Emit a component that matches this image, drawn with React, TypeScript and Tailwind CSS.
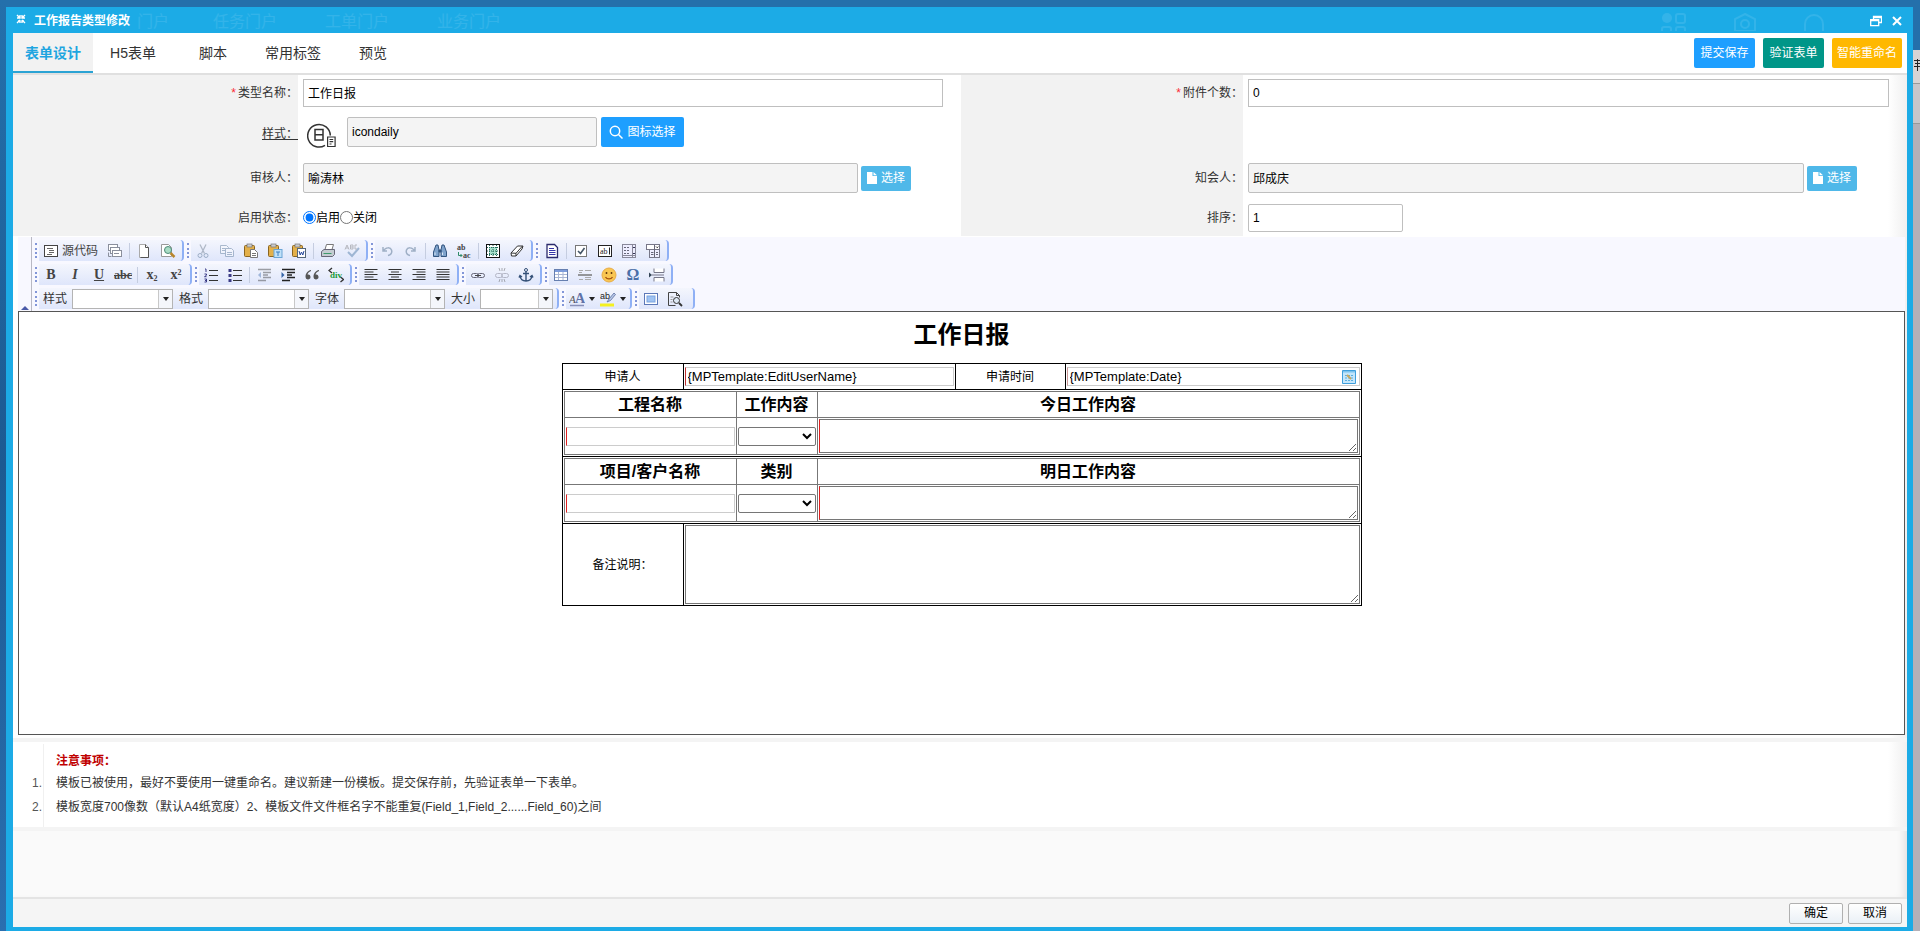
import { useState } from "react";
import type { ReactNode } from "react";

const TABS = ["表单设计", "H5表单", "脚本", "常用标签", "预览"];

const INPUT = "min-w-0 border border-[#bfbfbf] px-1 text-xs text-black outline-none";
const READONLY = `${INPUT} h-[30px] rounded-xs bg-[#f4f4f4]`;

/* ---------- toolbar icons ---------- */

function Icon({ children, dim }: { children: ReactNode; dim?: boolean }) {
  return (
    <svg
      viewBox="0 0 16 16"
      fill="none"
      stroke="#444"
      aria-hidden="true"
      className={`h-4 w-4 shrink-0 ${dim ? "opacity-40" : ""}`}
    >
      {children}
    </svg>
  );
}

const SourceIcon = () => (
  <Icon>
    <rect x="1.5" y="2.5" width="13" height="11" fill="#fff" />
    <path d="M4 5.5h6M6 7.500h5M6 9.500h5M4 11.500h5" stroke="#666" />
  </Icon>
);
const TemplatesIcon = () => (
  <Icon>
    <g stroke="#8a8f9c">
      <rect x="1.5" y="1.5" width="9" height="6" fill="#fff" />
      <rect x="3.5" y="4.5" width="9" height="6" fill="#fff" />
      <rect x="5.5" y="7.5" width="9" height="6" fill="#fff" />
      <path d="M7 10.5h5M1.5 9.5v4h3" />
    </g>
  </Icon>
);
const NewPageIcon = () => (
  <Icon>
    <path d="M3.500 1.500h6l3 3v10h-9z" fill="#fff" stroke="#aaa" />
    <path d="M9.500 1.500v3h3v10h-8" stroke="#555" />
  </Icon>
);
const PreviewIcon = () => (
  <Icon>
    <path d="M1.500 1.500h7l3 3v9h-10z" fill="#fff" stroke="#999" />
    <circle cx="8" cy="7" r="3.500" fill="#a8dcc4" stroke="#4f8a78" />
    <path d="m10.500 10 4 4" stroke="#b8862c" strokeWidth="2.500" />
  </Icon>
);
const CutIcon = () => (
  <Icon dim>
    <path d="m5 1.500 4.500 9M11 1.500l-4.500 9" stroke="#567" strokeWidth="1.300" />
    <circle cx="5" cy="12.500" r="2" stroke="#357" />
    <circle cx="11" cy="12.500" r="2" stroke="#357" />
  </Icon>
);
const CopyIcon = () => (
  <Icon dim>
    <path d="M1.500 2.500h6l2 2v6h-8zM3 5.500h4M3 7.500h4" fill="#fff" stroke="#468" />
    <path d="M6.500 5.500h6l2 2v6h-8zM8 9.500h5M8 11.500h5" fill="#fff" stroke="#468" />
  </Icon>
);
function PasteIcon({ kind }: { kind: "plain" | "text" | "word" }) {
  return (
    <Icon>
      <rect x="1.500" y="2.500" width="10" height="11" rx="1" fill="#e3b04a" stroke="#8a6520" />
      <rect x="4" y="1" width="5" height="3" fill="#ccc" stroke="#777" strokeWidth=".7" />
      {kind === "plain" && (
        <path d="M7.500 6.500h4l3 3v5h-7zM9 10.500h4M9 12.500h4" fill="#fff" stroke="#777" />
      )}
      {kind === "text" && (
        <>
          <rect x="7" y="6.500" width="8" height="8" fill="#bfe0f8" stroke="#6aa5d6" />
          <path d="M9 9h4M11 9v4" stroke="#3b7fc0" />
        </>
      )}
      {kind === "word" && (
        <>
          <rect x="6.500" y="5.500" width="8" height="9" fill="#fff" stroke="#567" />
          <path d="m8 8 1.200 4 1.300-3 1.300 3L13 8" stroke="#24479c" />
        </>
      )}
    </Icon>
  );
}
const PrintIcon = () => (
  <Icon>
    <path d="M5 6.500 6.500 1.500h7L12 6.500" fill="#fff" stroke="#777" />
    <path d="M1.500 8.500 4 6.500h10.500v5l-2 2h-11z" fill="#c4ccd2" stroke="#667" />
    <path d="M3.500 10.500h8" stroke="#3d9a6c" />
  </Icon>
);
const SpellIcon = () => (
  <Icon dim>
    <path d="m4 9 4 4 7-8" stroke="#369" strokeWidth="2" />
    <path d="M1 6.500 3 2l2 4.500M2 5h2M6.500 2h2.500v4H6.500zM6.500 4H9M13 2h-2v4h2" stroke="#666" />
  </Icon>
);
const UndoIcon = () => (
  <Icon dim>
    <path d="M4 4v4h4M4.500 8c2-4 7-4 8-1s-1 5-3.500 5.500" stroke="#357" strokeWidth="1.500" />
  </Icon>
);
const RedoIcon = () => (
  <Icon dim>
    <path d="M12 4v4H8M11.500 8c-2-4-7-4-8-1s1 5 3.500 5.500" stroke="#357" strokeWidth="1.500" />
  </Icon>
);
const FindIcon = () => (
  <Icon>
    <path d="M4 2h2l1 5v6.500H1.500V9zM10 2h2l2.500 7v4.500H9V7z" fill="#7fa3cc" stroke="#33557f" />
    <path d="M7 7h2v2H7z" fill="#33557f" stroke="#33557f" />
    <path d="M3 9.500v2.500M10.500 9.500v2.500" stroke="#dce9f7" />
  </Icon>
);
const ReplaceIcon = () => (
  <Icon>
    <text x="1" y="7" fontSize="8" fill="#444" stroke="none">ab</text>
    <text x="7" y="15" fontSize="8" fill="#444" stroke="none">ac</text>
    <path d="M2.500 9v3.500H6M4.500 11 6 12.500 4.500 14" stroke="#2f8b68" />
  </Icon>
);
const SelectAllIcon = () => (
  <Icon>
    <rect x="1.500" y="1.500" width="13" height="13" fill="#fff" stroke="#111" />
    <rect x="4" y="4" width="8" height="8" fill="#a6e0cc" stroke="none" />
    <path d="M4.500 2v12M11.500 2v12M2 4.500h12M2 8h12M2 11.500h12M8 2v12" stroke="#22685a" strokeDasharray="1 1" />
  </Icon>
);
const EraserIcon = () => (
  <Icon>
    <path d="M2 10 8.500 3h5.500l-1 3-6 7H2.500z" fill="#fff" stroke="#333" strokeLinejoin="round" />
    <path d="m2 10 5 .300L13.500 3M7 10.300V13" stroke="#333" />
  </Icon>
);
const FormIcon = () => (
  <Icon>
    <path d="M3 1.500h7.500l3 3v10H3z" fill="#fff" stroke="#2a2a6c" strokeWidth="1.300" />
    <path d="M5 5.500h5M5 7.500h6.500M5 9.500h6.500M5 11.500h6.500" stroke="#3636a8" />
  </Icon>
);
const CheckboxIcon = () => (
  <Icon>
    <rect x="2.500" y="2.500" width="11" height="11" fill="#fff" stroke="#777" />
    <path d="m5 8 2.500 2.500L11.500 5" stroke="#456" strokeWidth="1.600" />
  </Icon>
);
const TextFieldIcon = () => (
  <Icon>
    <rect x="1.500" y="2.500" width="13" height="11" fill="#fff" stroke="#222" />
    <text x="3" y="11" fontSize="8" fontWeight="normal" fill="#222" stroke="none">ab</text>
    <path d="M12.500 4.500v7" stroke="#222" />
  </Icon>
);
const TextareaIcon = () => (
  <Icon>
    <rect x="1.500" y="1.500" width="13" height="13" fill="#eef" stroke="#889" />
    <path d="M3 4.500h6M3 7.500h6M3 10.500h6" stroke="#667" strokeDasharray="2 1" />
    <path d="M11.500 2v12M2 12.500h12" stroke="#889" />
    <path d="m12 5 1-1 1 1M12 10l1 1 1-1" stroke="#335" />
  </Icon>
);
const SelectFieldIcon = () => (
  <Icon>
    <rect x="1.500" y="1.500" width="13" height="5" fill="#fff" stroke="#778" />
    <rect x="4.500" y="6.500" width="10" height="8" fill="#eef" stroke="#778" />
    <path d="M9.500 2v12M6 9.500h2.500M6 11.500h2.500M11 9.500h2M11 11.500h2" stroke="#667" />
    <path d="m11 3.500 1.200 1.200L13.400 3.500" stroke="#222" />
  </Icon>
);
function ListIcon({ ordered }: { ordered?: boolean }) {
  return (
    <Icon>
      <path d="M6 3.500h9M6 8.500h9M6 13.500h9" stroke="#333" />
      {ordered ? (
        <path d="M2 2h1v3M1.500 7h2v1.200l-2 1.500h2M1.500 12h2v3h-2M2 13.500h1.500" stroke="#3b3b86" />
      ) : (
        <path d="M1.500 2h3v3h-3zM1.500 7h3v3h-3zM1.500 12h3v3h-3z" fill="#3b3b86" stroke="none" />
      )}
    </Icon>
  );
}
function IndentIcon({ out }: { out?: boolean }) {
  return (
    <Icon dim={out}>
      <path d="M2 2.500h13M7 5.500h8M7 8h5M7 10.500h8M2 13.500h8" stroke="#222" strokeWidth="1.500" />
      <path d={out ? "M5 5 2 8l3 3z" : "m1.500 5 3 3-3 3z"} fill="#3565a8" stroke="none" />
    </Icon>
  );
}
const QuoteIcon = () => (
  <Icon>
    <path
      d="M7 3C4 3.500 1.500 6 1.500 10a2.500 2.500 0 1 0 2-2.500C3.800 6 5 4.700 7 4zM15 3c-3 .500-5.500 3-5.500 7a2.500 2.500 0 1 0 2-2.500C11.800 6 13 4.700 15 4z"
      fill="#555"
      stroke="none"
    />
  </Icon>
);
const DivIcon = () => (
  <Icon>
    <path d="M4 1 1 3.500 4 6M12.500 10l3 2.500-3 2.500" stroke="#333" strokeWidth="1.300" />
    <text x="2" y="11" fontSize="9" fill="#189a38" stroke="none">div</text>
  </Icon>
);
const ALIGN_PATHS = {
  left: "M1.500 2.500h13M1.500 5h9M1.500 7.500h13M1.500 10h9M1.500 12.500h13",
  center: "M1.500 2.500h13M4 5h8M1.500 7.500h13M4 10h8M1.500 12.500h13",
  right: "M1.500 2.500h13M5.500 5h9M1.500 7.500h13M5.500 10h9M1.500 12.500h13",
  justify: "M1.500 2.500h13M1.500 5h13M1.500 7.500h13M1.500 10h13M1.500 12.500h13",
};
function AlignIcon({ side }: { side: keyof typeof ALIGN_PATHS }) {
  return (
    <Icon>
      <path d={ALIGN_PATHS[side]} stroke="#333" strokeWidth="1.200" />
    </Icon>
  );
}
function LinkIcon({ broken }: { broken?: boolean }) {
  return (
    <Icon dim={broken}>
      <rect x="1.500" y="6.500" width="7" height="4" rx="2" stroke="#667" />
      <rect x="7.500" y="6.500" width="7" height="4" rx="2" stroke="#667" />
      {broken ? <path d="m5 1 1 3M8 1v3M11 1l-1 3M5 15l1-3M8 15v-3M11 15l-1-3" /> : <path d="M5 8.500h6" />}
    </Icon>
  );
}
const AnchorIcon = () => (
  <Icon>
    <circle cx="8" cy="3" r="1.500" stroke="#345077" />
    <path d="M8 4.500V14M5 6.500h6M2 9c.500 3.500 3 5 6 5s5.500-1.500 6-5M1 10.500 2 8.500l2 1.500M15 10.500l-1-2-2 1.500" stroke="#345077" strokeWidth="1.400" />
  </Icon>
);
const TableIcon = () => (
  <Icon>
    <rect x="1.500" y="2.500" width="13" height="11" fill="#fff" stroke="#667fb0" />
    <path d="M2 4h12" stroke="#7d9cdb" strokeWidth="2" />
    <path d="M5.500 5v8M10 5v8M2 7.500h12M2 10.500h12" stroke="#a9b6d4" />
  </Icon>
);
const RuleIcon = () => (
  <Icon>
    <path d="M2 3.500h4M8 3.500h6M2 12.500h4M8 12.500h6M2 5.500h3M8 10.500h6" stroke="#aaa" />
    <path d="M1 8h14" stroke="#777" strokeWidth="1.500" />
  </Icon>
);
const SmileyIcon = () => (
  <Icon>
    <circle cx="8" cy="8" r="7" fill="#f9c652" stroke="#e8ac48" />
    <path d="M5.500 5v2M10.500 5v2" stroke="#6b3f10" strokeWidth="1.500" />
    <path d="M4.500 10c1.500 2.500 5.500 2.500 7 0" stroke="#a4500f" strokeWidth="1.300" />
  </Icon>
);
const PageBreakIcon = () => (
  <Icon>
    <path d="M5 1.500v4h10v-4M5 14.500v-4h10v4M3 8h12" fill="#fff" stroke="#778" />
    <path d="m0 5.500 3 2.500-3 2.500z" fill="#345" stroke="none" />
  </Icon>
);
const MaximizeIcon = () => (
  <Icon>
    <rect x="1.500" y="2.500" width="13" height="11" fill="#fff" stroke="#5c78b8" />
    <rect x="4" y="5" width="8" height="6" fill="#9fc3f2" stroke="#7aa3df" />
  </Icon>
);
const BlocksIcon = () => (
  <Icon>
    <path d="M1.500 14.500v-13h8l3 3v2M9.500 1.500v3h3M1.500 14.500h7" stroke="#444" />
    <path d="M3.500 6h3M3.500 8.500h2M3.500 11h2" stroke="#999" />
    <circle cx="9.500" cy="9.500" r="3" fill="#dde8f5" stroke="#333" />
    <path d="m12 12 3 3" stroke="#333" strokeWidth="1.800" />
  </Icon>
);
const TextColorIcon = () => (
  <svg viewBox="0 0 16 16" className="h-4 w-4" aria-hidden="true">
    <text x="0" y="12" fontSize="11" fontStyle="italic" fontFamily="Liberation Serif" fill="#555">A</text>
    <text x="6" y="12" fontSize="14" fontWeight="bold" fontFamily="Liberation Serif" fill="#5f73a8">A</text>
    <path d="M1 14.500h14" stroke="#8890b8" strokeWidth="1.500" />
  </svg>
);
const BgColorIcon = () => (
  <svg viewBox="0 0 16 16" className="h-4 w-4" aria-hidden="true">
    <text x="0" y="8" fontSize="9" fill="#222">ab</text>
    <path d="m7 11 2-3 5-6 1.500 1.500-5 6z" fill="#b9c8e6" stroke="#5a6da0" strokeWidth=".8" />
    <path d="M0 12.500h14v3H0z" fill="#f4f020" />
  </svg>
);

/* ---------- toolbar pieces ---------- */

function Tool({ label, children }: { label: string; children: ReactNode }) {
  return (
    <button
      type="button"
      aria-label={label}
      title={label}
      className="flex h-[21px] w-6 items-center justify-center font-['Liberation_Serif',serif] text-sm font-bold text-[#444]"
    >
      {children}
    </button>
  );
}

const Sep = () => <span className="mx-0.5 h-4 w-px bg-[#c5cde0]" />;

const Caret = () => (
  <svg viewBox="0 0 6 4" className="h-1 w-1.5 shrink-0" aria-hidden="true">
    <path d="M0 0h6L3 4z" fill="#222" />
  </svg>
);

function Group({ children }: { children: ReactNode }) {
  return (
    <div className="flex items-center">
      <span className="mr-0.5 h-[15px] border-l-2 border-dotted border-[#8296d8]" />
      <div className="flex h-[21px] items-center rounded-r-sm border-r-2 border-[#8fb0f5] bg-linear-to-b from-[#f4f6fd] to-[#dfe6fb] pr-0.5">
        {children}
      </div>
      <span className="w-[3px]" />
    </div>
  );
}

function Combo({ label, wide = true }: { label: string; wide?: boolean }) {
  return (
    <label className="flex items-center gap-[5px] pr-0.5 pl-1 text-xs text-[#333]">
      {label}
      <span
        className={`flex h-5 items-center border border-[#b4b4b4] bg-white ${wide ? "w-[101px]" : "w-[73px]"}`}
      >
        <select className="h-full min-w-0 flex-1 appearance-none outline-none" />
        <span className="flex h-full w-3.5 items-center justify-center border-l border-[#c8c8c8] bg-[#f4f6fb]">
          <Caret />
        </span>
      </span>
    </label>
  );
}

function Toolbar() {
  return (
    <div className="flex bg-[#f8f8ff]">
      <button type="button" aria-label="收起工具栏" className="flex w-[13px] items-end justify-center pb-px">
        <svg viewBox="0 0 8 4" className="h-1 w-2">
          <path d="M0 4h8L4 0z" fill="#4a5aa8" />
        </svg>
      </button>
      <div className="flex flex-1 flex-col gap-[3px] border-l border-[#b9b9c4] pt-[3px] pb-0.5 pl-[3px]">
        <div className="flex">
          <Group>
            <button type="button" className="flex h-[21px] w-16 items-center gap-[3px] pl-1 text-xs whitespace-nowrap text-[#444]">
              <SourceIcon />
              源代码
            </button>
            <Tool label="模板"><TemplatesIcon /></Tool>
            <Sep />
            <Tool label="新建"><NewPageIcon /></Tool>
            <Tool label="预览"><PreviewIcon /></Tool>
          </Group>
          <Group>
            <Tool label="剪切"><CutIcon /></Tool>
            <Tool label="复制"><CopyIcon /></Tool>
            <Tool label="粘贴"><PasteIcon kind="plain" /></Tool>
            <Tool label="粘贴为文本"><PasteIcon kind="text" /></Tool>
            <Tool label="从 Word 粘贴"><PasteIcon kind="word" /></Tool>
            <Sep />
            <Tool label="打印"><PrintIcon /></Tool>
            <Tool label="拼写检查"><SpellIcon /></Tool>
          </Group>
          <Group>
            <Tool label="撤消"><UndoIcon /></Tool>
            <Tool label="重做"><RedoIcon /></Tool>
            <Sep />
            <Tool label="查找"><FindIcon /></Tool>
            <Tool label="替换"><ReplaceIcon /></Tool>
            <Sep />
            <Tool label="全选"><SelectAllIcon /></Tool>
            <Tool label="清除格式"><EraserIcon /></Tool>
          </Group>
          <Group>
            <Tool label="表单"><FormIcon /></Tool>
            <Sep />
            <Tool label="复选框"><CheckboxIcon /></Tool>
            <Tool label="单行文本"><TextFieldIcon /></Tool>
            <Tool label="多行文本"><TextareaIcon /></Tool>
            <Tool label="列表"><SelectFieldIcon /></Tool>
          </Group>
        </div>
        <div className="flex">
          <Group>
            <Tool label="加粗">B</Tool>
            <Tool label="倾斜"><i>I</i></Tool>
            <Tool label="下划线"><u>U</u></Tool>
            <Tool label="删除线"><s className="text-xs">abc</s></Tool>
            <Sep />
            <Tool label="下标"><span>x<sub className="text-[8px]">2</sub></span></Tool>
            <Tool label="上标"><span>x<sup className="text-[8px]">2</sup></span></Tool>
          </Group>
          <Group>
            <Tool label="编号列表"><ListIcon ordered /></Tool>
            <Tool label="项目列表"><ListIcon /></Tool>
            <Sep />
            <Tool label="减少缩进"><IndentIcon out /></Tool>
            <Tool label="增加缩进"><IndentIcon /></Tool>
            <Tool label="引用"><QuoteIcon /></Tool>
            <Tool label="DIV 标签"><DivIcon /></Tool>
          </Group>
          <Group>
            <Tool label="左对齐"><AlignIcon side="left" /></Tool>
            <Tool label="居中"><AlignIcon side="center" /></Tool>
            <Tool label="右对齐"><AlignIcon side="right" /></Tool>
            <Tool label="两端对齐"><AlignIcon side="justify" /></Tool>
          </Group>
          <Group>
            <Tool label="超链接"><LinkIcon /></Tool>
            <Tool label="取消超链接"><LinkIcon broken /></Tool>
            <Tool label="锚点"><AnchorIcon /></Tool>
          </Group>
          <Group>
            <Tool label="表格"><TableIcon /></Tool>
            <Tool label="水平线"><RuleIcon /></Tool>
            <Tool label="表情"><SmileyIcon /></Tool>
            <Tool label="特殊符号"><span className="text-base text-[#4a6fa8]">Ω</span></Tool>
            <Tool label="分页符"><PageBreakIcon /></Tool>
          </Group>
        </div>
        <div className="flex">
          <Group>
            <Combo label="样式" />
            <Combo label="格式" />
            <Combo label="字体" />
            <Combo label="大小" wide={false} />
          </Group>
          <Group>
            <button type="button" aria-label="文本颜色" className="flex h-[21px] w-[31px] items-center justify-center gap-1">
              <TextColorIcon />
              <Caret />
            </button>
            <button type="button" aria-label="背景颜色" className="flex h-[21px] w-[31px] items-center justify-center gap-1">
              <BgColorIcon />
              <Caret />
            </button>
          </Group>
          <Group>
            <Tool label="全屏"><MaximizeIcon /></Tool>
            <Tool label="显示区块"><BlocksIcon /></Tool>
            <span className="w-1" />
          </Group>
        </div>
      </div>
    </div>
  );
}

/* ---------- template being edited ---------- */

function WorkTable({ heads }: { heads: [string, string, string] }) {
  return (
    <table className="w-full table-fixed border-collapse border border-black">
      <colgroup>
        <col className="w-[172px]" />
        <col className="w-[81px]" />
        <col />
      </colgroup>
      <thead>
        <tr className="h-[26px] text-base leading-6">
          {heads.map((h) => (
            <th key={h} className="border border-[#777] p-0 font-bold">
              {h}
            </th>
          ))}
        </tr>
      </thead>
      <tbody>
        <tr className="h-[37px]">
          <td className="border border-[#777] px-px py-0">
            <input
              aria-label={heads[0]}
              className="block h-[19px] w-full border border-[#ccc] border-l-[#e02020] outline-none"
            />
          </td>
          <td className="border border-[#777] px-px py-0">
            <select aria-label={heads[1]} className="block h-[19px] w-full rounded-xs border border-[#767676] bg-white" />
          </td>
          <td className="border border-[#777] p-px">
            <textarea
              aria-label={heads[2]}
              className="block h-[34px] w-full border border-[#767676] border-l-[#e02020] outline-none"
            />
          </td>
        </tr>
      </tbody>
    </table>
  );
}

function TemplateDocument() {
  return (
    <div className="min-h-[424px] border border-[#555] bg-white pt-[5px] text-black">
      <h1 className="mb-2.5 text-center text-2xl leading-9 font-bold">工作日报</h1>
      <table className="mx-auto w-[800px] table-fixed border-collapse text-center text-xs">
        <colgroup>
          <col className="w-[121px]" />
          <col className="w-[272px]" />
          <col className="w-[110px]" />
          <col />
        </colgroup>
        <tbody>
          <tr className="h-[26px]">
            <td className="border border-black p-0">
              <label htmlFor="applicant">申请人</label>
            </td>
            <td className="border border-black px-px py-0">
              <input
                id="applicant"
                defaultValue="{MPTemplate:EditUserName}"
                className="block h-[19px] w-full border border-[#ccc] border-l-[#c03030] px-0.5 text-[13px] outline-none"
              />
            </td>
            <td className="border border-black p-0">
              <label htmlFor="applyDate">申请时间</label>
            </td>
            <td className="border border-black px-px py-0">
              <div className="flex h-[19px] items-center border border-[#ccc] border-l-[#c99] pr-[3px]">
                <input
                  id="applyDate"
                  defaultValue="{MPTemplate:Date}"
                  className="min-w-0 flex-1 px-0.5 text-[13px] outline-none"
                />
                <svg viewBox="0 0 14 14" className="h-3.5 w-3.5" aria-hidden="true">
                  <path d="M.5 .5h13v13H.5z" fill="#c4e6fb" stroke="#3f9fdc" />
                  <path d="M1 1h12v1.500H1z" fill="#7cc4ee" />
                  <path d="M3 5.500h8M3 8h8M3 10.500h8" stroke="#5aaee0" strokeDasharray="2 1" />
                  <path d="m5 5 4 4" stroke="#c8a860" strokeWidth="2" />
                </svg>
              </div>
            </td>
          </tr>
          <tr>
            <td colSpan={4} className="border border-black p-px">
              <WorkTable heads={["工程名称", "工作内容", "今日工作内容"]} />
            </td>
          </tr>
          <tr>
            <td colSpan={4} className="border border-black p-px">
              <WorkTable heads={["项目/客户名称", "类别", "明日工作内容"]} />
            </td>
          </tr>
          <tr>
            <td className="border border-black p-0">
              <label htmlFor="remark">备注说明：</label>
            </td>
            <td colSpan={3} className="border border-black p-px">
              <textarea id="remark" className="block h-[79px] w-full border border-[#767676] outline-none" />
            </td>
          </tr>
        </tbody>
      </table>
    </div>
  );
}

/* ---------- form above the editor ---------- */

function FieldLabel({ htmlFor, required, children }: { htmlFor?: string; required?: boolean; children: ReactNode }) {
  return (
    <div className="flex items-center justify-end bg-[#f2f2f2]">
      <label htmlFor={htmlFor}>
        {required && <span className="mr-0.5 text-red-500">*</span>}
        {children}
      </label>
    </div>
  );
}

function PickButton() {
  return (
    <button
      type="button"
      className="flex h-[25px] w-[50px] items-center justify-center gap-1 rounded-xs bg-[#4fb8e9] text-xs text-white"
    >
      <svg viewBox="0 0 10 12" className="h-3 w-2.5" aria-hidden="true">
        <path d="M0 0h5.500v4H10v8H0zM6.500 0 10 3.200H6.500z" fill="#fff" />
      </svg>
      选择
    </button>
  );
}

function DailyIcon() {
  return (
    <svg viewBox="0 0 30 26" className="h-[26px] w-[30px] shrink-0" fill="none" stroke="#333" strokeWidth="1.500" aria-hidden="true">
      <path d="M18 23.300A11.300 11.300 0 1 1 23.300 13.500" />
      <path d="M8 7.500h8v10.500H8zM8 12.700h8" />
      <path d="M20.600 15h7.500v9.500h-7.500zM22.500 17.500h3.700M22.500 19.700h3.700M22.500 22h2" strokeWidth="1.200" />
    </svg>
  );
}

function TypeForm() {
  return (
    <div className="grid grid-cols-[285fr_663fr_282fr_664fr] grid-rows-[36px_46px_42px_37px] text-xs text-[#333]">
      <FieldLabel htmlFor="typeName" required>类型名称：</FieldLabel>
      <div className="flex items-center pr-[18px] pl-[5px]">
        <input id="typeName" defaultValue="工作日报" className={`${INPUT} h-7 flex-1 bg-white pb-0.5`} />
      </div>
      <FieldLabel htmlFor="attachCount" required>附件个数：</FieldLabel>
      <div className="flex items-center pr-[18px] pl-[5px]">
        <input id="attachCount" defaultValue="0" className={`${INPUT} h-7 flex-1 bg-white`} />
      </div>

      <FieldLabel htmlFor="iconName"><span className="underline">样式：</span></FieldLabel>
      <div className="flex items-center gap-1 pb-1 pl-[9px]">
        <div className="pt-1.5"><DailyIcon /></div>
        <input id="iconName" readOnly defaultValue="icondaily" className={`${READONLY} ml-1.5 w-[250px]`} />
        <button type="button" className="flex h-[30px] w-[83px] items-center justify-center gap-1 rounded-xs bg-[#1e9fff] text-xs text-white">
          <svg viewBox="0 0 14 14" className="h-3.5 w-3.5" fill="none" stroke="#fff" strokeWidth="1.500" aria-hidden="true">
            <circle cx="6" cy="6" r="4.700" />
            <path d="m9.500 9.500 4 4" />
          </svg>
          图标选择
        </button>
      </div>
      <div className="bg-[#f2f2f2]" />
      <div />

      <FieldLabel htmlFor="reviewer">审核人：</FieldLabel>
      <div className="flex items-center gap-[3px] pr-[50px] pl-[5px]">
        <input id="reviewer" readOnly defaultValue="喻涛林" className={`${READONLY} flex-1 pb-0.5`} />
        <PickButton />
      </div>
      <FieldLabel htmlFor="notified">知会人：</FieldLabel>
      <div className="flex items-center gap-[3px] pr-[50px] pl-[5px]">
        <input id="notified" readOnly defaultValue="邱成庆" className={`${READONLY} flex-1 pb-0.5`} />
        <PickButton />
      </div>

      <FieldLabel>启用状态：</FieldLabel>
      <div className="flex items-center pl-[5px] text-black">
        <label className="flex items-center">
          <input type="radio" name="status" defaultChecked />
          启用
        </label>
        <label className="flex items-center">
          <input type="radio" name="status" />
          关闭
        </label>
      </div>
      <FieldLabel htmlFor="sortOrder">排序：</FieldLabel>
      <div className="flex items-center pl-[5px]">
        <input id="sortOrder" defaultValue="1" className={`${INPUT} h-7 w-[155px] rounded-xs bg-white`} />
      </div>
    </div>
  );
}

/* ---------- dialog ---------- */

function TitleBar() {
  return (
    <header className="relative flex h-[26px] items-center overflow-hidden pt-0.5 pr-[5px] pl-[3px] text-white">
      {/* portal header showing through the translucent bar */}
      <div aria-hidden="true" className="absolute inset-0 flex items-center pt-1 pl-[124px] text-base whitespace-nowrap text-white/10">
        <span className="w-[76px]">门户</span>
        <span className="w-[112px]">任务门户</span>
        <span className="w-[112px]">工单门户</span>
        <span>业务门户</span>
        <svg viewBox="0 0 164 18" className="mr-[82px] ml-auto h-[18px] w-[164px]" fill="none" stroke="currentColor" strokeWidth="2">
          <circle cx="6" cy="5" r="5" fill="currentColor" stroke="none" />
          <rect x="15" y="1" width="9" height="9" rx="2" />
          <rect x="1" y="14" width="9" height="9" rx="2" />
          <rect x="15" y="14" width="9" height="9" rx="2" />
          <path d="m84 1 10 5v12H74V6z" />
          <circle cx="84" cy="11" r="4" />
          <path d="M144 18v-7a9 9 0 0 1 18 0v7" />
        </svg>
      </div>
      <svg viewBox="0 0 10 10" className="mb-1 h-2.5 w-2.5" aria-hidden="true">
        <path d="m1 1 3 3M9 1 6 4M1 9l3-3M9 9 6 6M1 4h3V1M9 4H6V1M2 7h2v2M8 7H6v2" fill="none" stroke="#fff" strokeWidth="1.400" />
      </svg>
      <h2 className="ml-2 text-xs font-bold">工作报告类型修改</h2>
      <div className="relative ml-auto flex items-center gap-2.5">
        <button type="button" aria-label="还原" className="p-0">
          <svg viewBox="0 0 12 12" className="h-3 w-3" fill="none" stroke="#fff" strokeWidth="1.300">
            <path d="M3.500 4V1.500h8v6H9M3.500 2.500h8M.700 4.600h8v6h-8zM.700 5.600h8" />
          </svg>
        </button>
        <button type="button" aria-label="关闭" className="p-0">
          <svg viewBox="0 0 10 10" className="h-2.5 w-2.5" fill="none" stroke="#fff" strokeWidth="2">
            <path d="m1 1 8 8M9 1 1 9" />
          </svg>
        </button>
      </div>
    </header>
  );
}

const NOTES = [
  "模板已被使用，最好不要使用一键重命名。建议新建一份模板。提交保存前，先验证表单一下表单。",
  "模板宽度700像数（默认A4纸宽度）2、模板文件文件框名字不能重复(Field_1,Field_2......Field_60)之间",
];

const FOOTER_BUTTON =
  "h-[21px] w-[54px] rounded-xs border border-[#b0b0b0] bg-linear-to-b from-white to-[#eaf0f6] text-xs leading-4 text-black";

export default function App() {
  const [tab, setTab] = useState(TABS[0]);

  return (
    <div className="flex min-h-screen bg-[#2470ab] font-['Liberation_Sans','Noto_Sans_CJK_SC',sans-serif]">
      <div className="w-1.5 bg-linear-to-b from-[#2470ab] via-[#1c5a92] to-[#2a6fb0]" />
      <div className="mt-[7px] flex min-w-0 flex-1 flex-col bg-[#1cabe6] pr-1.5 pb-1 pl-[7px]">
        <TitleBar />

        <main className="flex flex-1 flex-col bg-[#fafafa]">
          <div className="flex h-[42px] items-start border-b-2 border-[#e0e0e0] bg-white">
            <nav className="flex flex-1">
              {TABS.map((t) => (
                <button
                  key={t}
                  type="button"
                  onClick={() => setTab(t)}
                  className={`h-10 w-20 border-b-2 pt-0.5 text-sm leading-5 ${
                    tab === t
                      ? "border-[#2ba3d4] bg-[#f2f2f2] font-bold text-[#1ea5e0]"
                      : "border-transparent text-[#333]"
                  }`}
                >
                  {t}
                </button>
              ))}
            </nav>
            <div className="flex gap-2 pt-[5px] pr-[5px] text-xs text-white">
              <button type="button" className="h-[30px] w-[61px] rounded-xs bg-[#1e9fff]">提交保存</button>
              <button type="button" className="h-[30px] w-[61px] rounded-xs bg-[#009688]">验证表单</button>
              <button type="button" className="h-[30px] w-[70px] rounded-xs bg-[#ffb800]">智能重命名</button>
            </div>
          </div>

          <div className="flex-1 shadow-[inset_-8px_0_10px_-6px_rgba(0,0,0,0.12)]">
            <div className="bg-linear-to-r from-white from-99% to-[#f0f0f0]">
              <TypeForm />
              <div className="mr-0.5 ml-[5px] pt-px">
                <Toolbar />
                <TemplateDocument />
              </div>
              <section className="mt-[3px] border-y-4 border-[#f4f4f4] text-xs text-[#333]">
                <div className="mt-0.5 flex">
                  <div className="w-[31px] border-r border-[#f0f0f0]" />
                  <div className="pt-[7px] pb-2">
                    <p className="pl-3 leading-5 font-bold text-[#c00000]">注意事项：</p>
                    <ol className="-ml-3 leading-6">
                      {NOTES.map((note, i) => (
                        <li key={note} className="flex">
                          <span className="w-6 text-[#555]">{i + 1}.</span>
                          {note}
                        </li>
                      ))}
                    </ol>
                  </div>
                </div>
              </section>
            </div>
          </div>

          <footer className="flex h-[30px] items-center justify-end gap-[5px] border-t-2 border-[#e4e4e4] bg-[#f5f5f5] pr-[5px]">
            <button type="button" className={FOOTER_BUTTON}>确定</button>
            <button type="button" className={FOOTER_BUTTON}>取消</button>
          </footer>
        </main>
      </div>
      <div className="flex w-[7px] flex-col">
        <div className="h-[50px] bg-[#2470ab]" />
        <div className="h-[34px] border-b border-[#999] bg-[#d8d4d4] pt-2">
          <svg viewBox="0 0 7 14" className="h-3.5 w-[7px]" stroke="#222" fill="none" aria-hidden="true">
            <path d="M1 2.500h6M2 5.500h5M1 8.500h6M4.500 1v12" />
          </svg>
        </div>
        <div className="h-10 border-b border-[#999] bg-[#c8c6ca]" />
        <div className="flex-1 bg-[#b4b0b8]" />
      </div>
    </div>
  );
}
